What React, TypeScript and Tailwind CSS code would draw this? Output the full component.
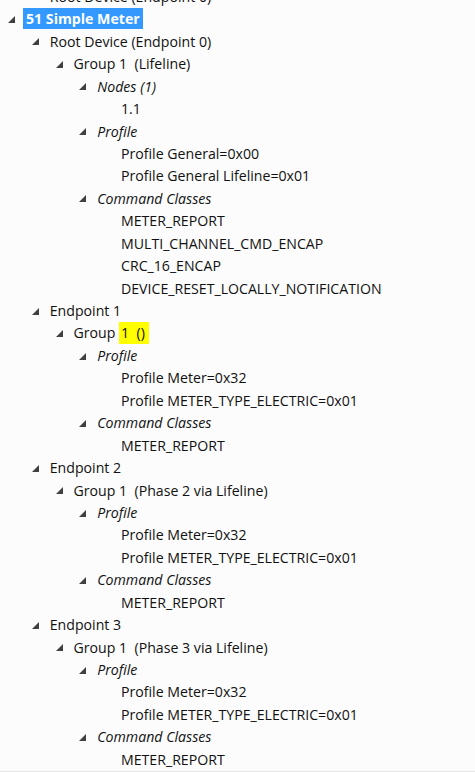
type Row = { level: number; text: string; kind?: "folder" | "category" | "leaf" | "root" | "hl"; arrow?: boolean };

const pads = ["pl-[0px]", "pl-[23.75px]", "pl-[47.5px]", "pl-[71.25px]", "pl-[95px]"];

const rows: Row[] = [
  { level: 1, text: "Root Device (Endpoint 0)" },
  { level: 0, text: "51 Simple Meter", kind: "root", arrow: true },
  { level: 1, text: "Root Device (Endpoint 0)", arrow: true },
  { level: 2, text: "Group 1  (Lifeline)", arrow: true },
  { level: 3, text: "Nodes (1)", kind: "category", arrow: true },
  { level: 4, text: "1.1" },
  { level: 3, text: "Profile", kind: "category", arrow: true },
  { level: 4, text: "Profile General=0x00" },
  { level: 4, text: "Profile General Lifeline=0x01" },
  { level: 3, text: "Command Classes", kind: "category", arrow: true },
  { level: 4, text: "METER_REPORT" },
  { level: 4, text: "MULTI_CHANNEL_CMD_ENCAP" },
  { level: 4, text: "CRC_16_ENCAP" },
  { level: 4, text: "DEVICE_RESET_LOCALLY_NOTIFICATION" },
  { level: 1, text: "Endpoint 1", arrow: true },
  { level: 2, text: "Group", kind: "hl", arrow: true },
  { level: 3, text: "Profile", kind: "category", arrow: true },
  { level: 4, text: "Profile Meter=0x32" },
  { level: 4, text: "Profile METER_TYPE_ELECTRIC=0x01" },
  { level: 3, text: "Command Classes", kind: "category", arrow: true },
  { level: 4, text: "METER_REPORT" },
  { level: 1, text: "Endpoint 2", arrow: true },
  { level: 2, text: "Group 1  (Phase 2 via Lifeline)", arrow: true },
  { level: 3, text: "Profile", kind: "category", arrow: true },
  { level: 4, text: "Profile Meter=0x32" },
  { level: 4, text: "Profile METER_TYPE_ELECTRIC=0x01" },
  { level: 3, text: "Command Classes", kind: "category", arrow: true },
  { level: 4, text: "METER_REPORT" },
  { level: 1, text: "Endpoint 3", arrow: true },
  { level: 2, text: "Group 1  (Phase 3 via Lifeline)", arrow: true },
  { level: 3, text: "Profile", kind: "category", arrow: true },
  { level: 4, text: "Profile Meter=0x32" },
  { level: 4, text: "Profile METER_TYPE_ELECTRIC=0x01" },
  { level: 3, text: "Command Classes", kind: "category", arrow: true },
  { level: 4, text: "METER_REPORT" },
];

const Expanded = () => (
  <svg width="7" height="7" viewBox="0 0 7 7" className="ml-[8px] mt-[1px]">
    <polygon points="7,0 7,7 0,7" fill="#404040" />
  </svg>
);

const TreeRow = ({ row }: { row: Row }) => {
  let label;
  if (row.kind === "root") {
    label = (
      <span className="flex h-[21px] items-center bg-[#3399ff] px-[3px] font-bold text-white">{row.text}</span>
    );
  } else if (row.kind === "hl") {
    label = (
      <span className="flex h-full items-center whitespace-pre px-[3px]">
        Group <span className="flex h-full items-center bg-[#ffff00] pl-[2px] pr-[4px]">1  ()</span>
      </span>
    );
  } else {
    label = (
      <span className={`whitespace-pre px-[3px] ${row.kind === "category" ? "italic" : ""}`}>{row.text}</span>
    );
  }
  return (
    <div className={`flex h-[22.45px] items-center ${pads[row.level]}`}>
      <div className="flex w-[23px] shrink-0 items-center">{row.arrow && <Expanded />}</div>
      {label}
    </div>
  );
};

export default function App() {
  return (
    <div className="h-[772px] w-[475px] overflow-hidden border-b border-[#e6e6e6] bg-[#fcfcfc] font-['Open_Sans',sans-serif] text-[14.15px] text-[#111]">
      <div className="mt-[-14.7px] flex flex-col">
        {rows.map((r, i) => (
          <TreeRow key={i} row={r} />
        ))}
      </div>
    </div>
  );
}
